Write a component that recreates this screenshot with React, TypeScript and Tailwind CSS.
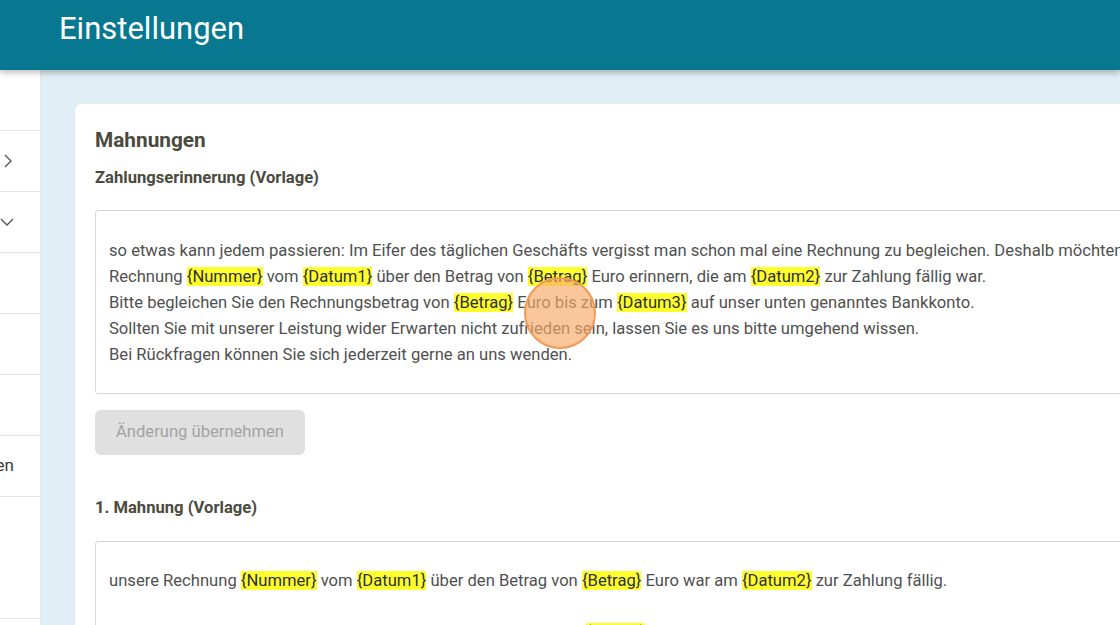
import { ReactNode } from "react";

const fontStack = { fontFamily: "Roboto, 'Liberation Sans', sans-serif" };

function Tag({ children }: { children: ReactNode }) {
  return <span className="bg-[#ffff2e] text-[#2f2f2f]">{children}</span>;
}

function ChevronRight() {
  return (
    <svg width="10" height="16" viewBox="0 0 10 16" fill="none" stroke="#555" strokeWidth="1.4">
      <path d="M2 2l6 6-6 6" />
    </svg>
  );
}

function ChevronDown() {
  return (
    <svg width="16" height="10" viewBox="0 0 16 10" fill="none" stroke="#555" strokeWidth="1.4">
      <path d="M1 2l6 6 6-6" />
    </svg>
  );
}

// sidebar is scrolled off to the left, only the right edge of each row shows
const sideRows: { label?: string; icon?: "right" | "down"; tall?: boolean }[] = [
  {},
  { icon: "right" },
  { icon: "down" },
  {},
  {},
  {},
  { label: "Mahnungen" },
  { tall: true },
];

function Sidebar() {
  return (
    <aside className="w-[41px] shrink-0 overflow-hidden border-r border-[#e6e6e6] bg-white">
      {sideRows.map((row, i) => (
        <div
          key={i}
          className={`flex items-center border-b border-[#e4e4e4] ${row.tall ? "h-[122px]" : "h-[61px]"}`}
        >
          {row.label && (
            <span className="-ml-[200px] w-[214px] shrink-0 text-right text-[17px] text-[#3c3c3c]">{row.label}</span>
          )}
          {row.icon === "right" && (
            <span className="pl-[3px]">
              <ChevronRight />
            </span>
          )}
          {row.icon === "down" && <ChevronDown />}
        </div>
      ))}
    </aside>
  );
}

export default function App() {
  return (
    <div className="relative h-[625px] w-[1120px] overflow-hidden bg-[#e0eff5]" style={fontStack}>
      <header className="relative z-10 flex h-[70px] items-center bg-[#07788f] pl-[59px] shadow-[0_3px_6px_rgba(0,0,0,0.25)]">
        <h1 className="pb-[12px] text-[31px] font-normal text-white">Einstellungen</h1>
      </header>

      <div className="flex h-[555px]">
        <Sidebar />
        <main className="flex-1 pl-[34px] pt-[34px]">
          <section className="w-[1200px] rounded-[6px] bg-white px-[20px] pt-[22px] shadow-[0_1px_3px_rgba(0,0,0,0.08)]">
            <h2 className="text-[20.8px] font-bold leading-[28px] text-[#4a4a3e]">Mahnungen</h2>
            <h3 className="mt-[12px] text-[16.6px] font-bold leading-[24px] text-[#4a4a3e]">
              Zahlungserinnerung (Vorlage)
            </h3>

            <div className="mt-[20px] h-[184px] whitespace-nowrap rounded-[3px] border border-[#d6d6d6] px-[13px] pt-[27px] text-[16.6px] leading-[26px] text-[#505050]">
              <p>
                so etwas kann jedem passieren: Im Eifer des täglichen Geschäfts vergisst man schon mal eine
                Rechnung zu begleichen. Deshalb möchten wir Sie an die
              </p>
              <p>
                Rechnung <Tag>{"{Nummer}"}</Tag> vom <Tag>{"{Datum1}"}</Tag> über den Betrag von{" "}
                <Tag>{"{Betrag}"}</Tag> Euro erinnern, die am <Tag>{"{Datum2}"}</Tag> zur Zahlung fällig war.
              </p>
              <p>
                Bitte begleichen Sie den Rechnungsbetrag von <Tag>{"{Betrag}"}</Tag> Euro bis zum{" "}
                <Tag>{"{Datum3}"}</Tag> auf unser unten genanntes Bankkonto.
              </p>
              <p>Sollten Sie mit unserer Leistung wider Erwarten nicht zufrieden sein, lassen Sie es uns bitte umgehend wissen.</p>
              <p>Bei Rückfragen können Sie sich jederzeit gerne an uns wenden.</p>
            </div>

            <button
              type="button"
              disabled
              className="mt-[16px] h-[45px] w-[210px] rounded-[6px] bg-[#e0e0e0] text-[16.6px] text-[#a3a3a3]"
            >
              Änderung übernehmen
            </button>

            <h3 className="mt-[41px] text-[16.6px] font-bold leading-[24px] text-[#4a4a3e]">1. Mahnung (Vorlage)</h3>

            <div className="mt-[21px] h-[184px] whitespace-nowrap rounded-[3px] border border-[#d6d6d6] px-[13px] pt-[26px] text-[16.6px] leading-[26px] text-[#505050]">
              <p>
                unsere Rechnung <Tag>{"{Nummer}"}</Tag> vom <Tag>{"{Datum1}"}</Tag> über den Betrag von{" "}
                <Tag>{"{Betrag}"}</Tag> Euro war am <Tag>{"{Datum2}"}</Tag> zur Zahlung fällig.
              </p>
              <p>&nbsp;</p>
              <p>
                Leider konnten wir bis jetzt keinen Zahlungseingang in Höhe von <Tag>{"{Betrag}"}</Tag> Euro feststellen.
              </p>
            </div>
          </section>
        </main>
      </div>

      <div className="pointer-events-none absolute left-[524px] top-[277px] h-[72px] w-[72px] rounded-full border-2 border-[#f29a55] bg-[#f7a968]/65" />
    </div>
  );
}
